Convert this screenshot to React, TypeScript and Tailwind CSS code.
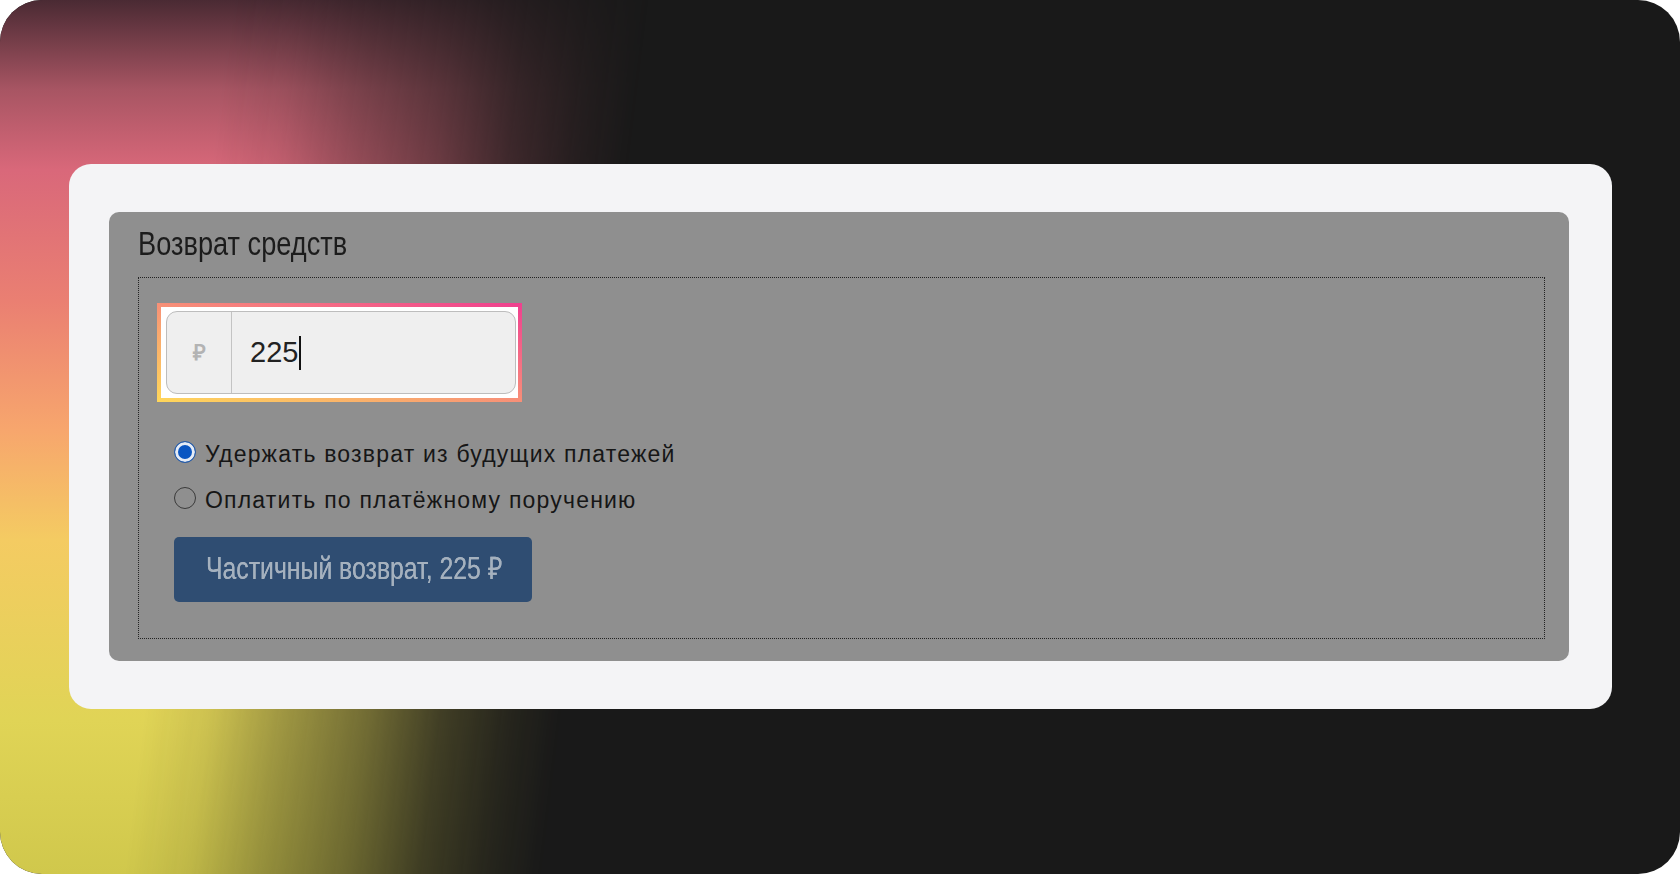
export default function App() {
  return (
    <div className="w-[1680px] h-[874px] bg-white">
      {/* Frame */}
      <div className="relative w-full h-full rounded-[42px] bg-[#191919] overflow-hidden">
        {/* Decorative glow on the left */}
        <div className="absolute inset-0 bg-[linear-gradient(to_bottom,#4a2a33_0px,#a85563_90px,#d9687a_170px,#ea7f72_300px,#f7a66d_430px,#f4cb62_540px,#e0d456_720px,#d0c84c_874px)] [mask-image:linear-gradient(97deg,#000_230px,rgba(0,0,0,0.9)_295px,rgba(0,0,0,0.68)_365px,rgba(0,0,0,0.45)_450px,rgba(0,0,0,0.2)_525px,rgba(0,0,0,0.07)_590px,transparent_645px)]"></div>

        {/* Card */}
        <div className="relative pt-[164px] pl-[69px]">
          <div className="w-[1543px] h-[545px] rounded-[22px] bg-[#f4f4f6] pt-[48px] pl-[40px]">
            {/* Gray panel */}
            <div className="w-[1460px] h-[449px] rounded-[10px] bg-[#8f8f8f] pl-[29px] pt-[9px]">
              <h2 className="h-[56px] text-[34px] leading-[44px] text-[#1c1c1c] font-['Liberation_Sans',sans-serif]">
                <span className="inline-block origin-left scale-x-[0.8] whitespace-nowrap">Возврат средств</span>
              </h2>

              {/* Dotted fieldset */}
              <div className="w-[1407px] h-[362px] border border-dotted border-[#222] pl-[18px] pt-[25px]">
                {/* Focus highlight */}
                <div className="w-[365px] h-[99px] p-[4px] bg-[linear-gradient(to_top_right,#ffd75a_0%,#f9a86e_35%,#f56f84_70%,#ef3f8f_100%)]">
                  <div className="w-full h-full bg-white pl-[5px] pt-[4px] pb-[3px] pr-[1px]">
                    <div className="flex w-[350px] h-[83px] rounded-[11px] border-[1.5px] border-[#bdbdbd] bg-[#efefef] overflow-hidden">
                      <div className="w-[65px] flex items-center justify-center border-r-[1.5px] border-[#c3c3c3] text-[22px] font-bold text-[#b3b3b3] font-['Liberation_Sans',sans-serif]">
                        ₽
                      </div>
                      <div className="flex items-center pl-[18px] pt-[1px] text-[29px] text-[#222] font-['Liberation_Sans',sans-serif]">
                        225
                        <span className="inline-block w-[2px] h-[34px] bg-[#111] ml-[1px]"></span>
                      </div>
                    </div>
                  </div>
                </div>

                {/* Options */}
                <div className="mt-[27px] pl-[17px] font-['Liberation_Sans',sans-serif] text-[23px] text-[#161616]">
                  <label className="flex items-center h-[46px] gap-[9px]">
                    <span className="w-[22px] h-[22px] rounded-full border-[1.5px] border-[#2c5da3] bg-[#0a56c2] shadow-[inset_0_0_0_3px_#e6ecf5]"></span>
                    <span className="mt-[5px] tracking-[1.2px]">Удержать возврат из будущих платежей</span>
                  </label>
                  <label className="flex items-center h-[46px] gap-[9px]">
                    <span className="w-[22px] h-[22px] rounded-full border-[1.5px] border-[#3a3a3a]"></span>
                    <span className="mt-[5px] tracking-[1.2px]">Оплатить по платёжному поручению</span>
                  </label>

                  <button className="mt-[16px] w-[358px] h-[65px] rounded-[5px] bg-[#2f4d72] text-left pl-[32px] text-[31px] text-[#a5b1be] font-['Liberation_Sans',sans-serif]">
                    <span className="inline-block origin-left scale-x-[0.8] whitespace-nowrap [text-shadow:0_0_0.4px_#a5b1be]">Частичный возврат, 225 ₽</span>
                  </button>
                </div>
              </div>
            </div>
          </div>
        </div>
      </div>
    </div>
  );
}
